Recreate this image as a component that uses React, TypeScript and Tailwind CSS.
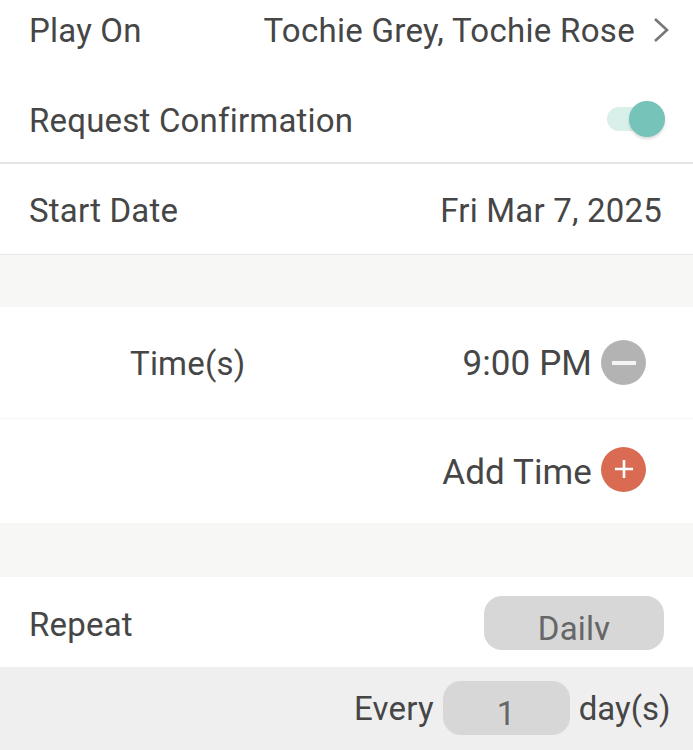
const App = () => {
  return (
    <div className="w-[693px] h-[750px] overflow-hidden bg-white font-['Roboto',sans-serif] text-[33px] tracking-[0.2px] text-[#464646]">
      {/* Play on */}
      <div className="h-[76px] pb-[14px] pl-[29px] pr-[24px] flex items-center justify-between">
        <span>Play On</span>
        <div className="flex items-center gap-[18px]">
          <span className="tracking-[0.3px]">Tochie Grey, Tochie Rose</span>
          <svg width="16" height="26" viewBox="0 0 16 26" fill="none" stroke="#777" strokeWidth="2.6" className="mb-[2px]">
            <path d="M2 2 L14 13 L2 24" />
          </svg>
        </div>
      </div>

      {/* Request confirmation */}
      <div className="h-[88px] pr-[28px] pl-[29px] flex items-center justify-between border-b-2 border-[#e4e4e4]">
        <span className="pt-[4px]">Request Confirmation</span>
        <div className="relative w-[58px] h-[24px] rounded-full bg-[#d8efea]">
          <div className="absolute right-0 top-[-6px] w-[36px] h-[36px] rounded-full bg-[#76c3b9] shadow-[0_2px_3px_rgba(0,0,0,0.15)]" />
        </div>
      </div>

      {/* Start date */}
      <div className="h-[91px] pl-[29px] pr-[31px] pt-[4px] flex items-center justify-between border-b border-[#e6e6e6]">
        <span>Start Date</span>
        <span>Fri Mar 7, 2025</span>
      </div>

      <div className="h-[52px] bg-[#f7f7f5]" />

      {/* Times */}
      <div className="h-[112px] pl-[130px] pr-[47px] flex items-center justify-between border-b border-[#f6f6f6]">
        <span className="pt-[2px]">Time(s)</span>
        <div className="flex items-center gap-[9px]">
          <span className="text-[35px] tracking-[0.1px] pt-[4px]">9:00 PM</span>
          <div className="w-[45px] h-[45px] rounded-full bg-[#b3b3b3] flex items-center justify-center">
            <div className="w-[24px] h-[4px] bg-[#f4f4f4]" />
          </div>
        </div>
      </div>
      <div className="h-[104px] pb-[4px] pr-[47px] flex items-center justify-end gap-[9px]">
        <span className="text-[35px] tracking-[0.1px] pt-[8px]">Add Time</span>
        <div className="w-[45px] h-[45px] rounded-full bg-[#d96b53] flex items-center justify-center">
          <svg width="18" height="18" viewBox="0 0 18 18" stroke="#fff" strokeWidth="2.6">
            <path d="M9 0 V18 M0 9 H18" />
          </svg>
        </div>
      </div>

      <div className="h-[54px] bg-[#f7f7f5]" />

      {/* Repeat */}
      <div className="h-[90px] pl-[29px] pr-[29px] flex items-center justify-between">
        <span className="pt-[6px]">Repeat</span>
        <div className="w-[180px] h-[54px] mt-[2px] rounded-[18px] bg-[#d7d7d7] text-center text-[#666666]">
          <div className="h-[44px] overflow-hidden leading-[66px]">Daily</div>
        </div>
      </div>
      <div className="h-[83px] pl-[354px] pr-[20px] bg-[#f0eff0] flex items-start pt-[14px] gap-[9px]">
        <span className="leading-[56px]">Every</span>
        <div className="w-[127px] shrink-0 h-[54px] rounded-[18px] bg-[#d7d7d7] overflow-hidden text-center text-[#666666] leading-[66px]">
          1
        </div>
        <span className="leading-[56px] tracking-normal">day(s)</span>
      </div>
    </div>
  )
}

export default App
